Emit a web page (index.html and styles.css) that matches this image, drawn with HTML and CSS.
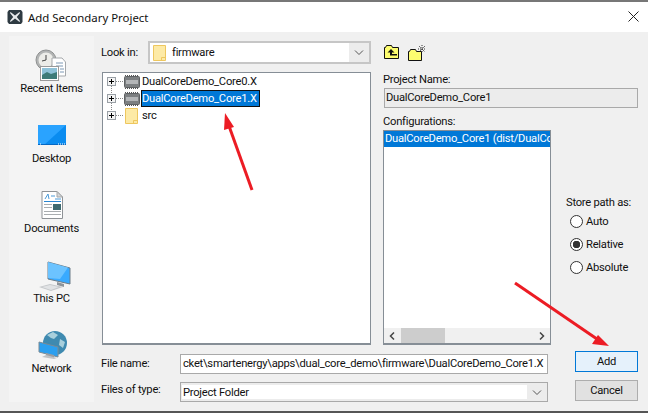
FILE: index.html
```html
<!DOCTYPE html>
<html lang="en">
<head>
<meta charset="utf-8">
<title>Add Secondary Project</title>
<link rel="stylesheet" href="styles.css">
</head>
<body>
<div class="window">
  <header class="titlebar">
    <svg class="app-icon" width="16" height="16" viewBox="0 0 16 16"><path d="M2 1h12l1.500 2v10L14 15H2L.5 13V3z" fill="#2e3a42"/><path d="M3.500 3L8 6.500 12.500 3l.5 1L9.800 8l3.200 4-.5 1L8 9.500 3.500 13l-.5-1 3.200-4L3 4z" fill="#e8eaec"/></svg>
    <span class="title">Add Secondary Project</span>
    <svg class="close" width="11" height="11" viewBox="0 0 11 11"><path d="M.5.500l10 10M10.500.500l-10 10" stroke="#222" stroke-width="1" fill="none"/></svg>
  </header>
  <div class="body">
    <nav class="sidebar">
      <div class="place">
        <svg width="32" height="32" viewBox="0 0 32 32">
          <circle cx="10" cy="12" r="10" fill="#b2b4b4" stroke="#8f9191"/><circle cx="10" cy="12" r="7.500" fill="#ecece8"/><path d="M10 7v5l-4 1" stroke="#444" fill="none"/>
          <path d="M16 10h10l3.500 4v14H16z" fill="#fff" stroke="#a5a8ab"/><path d="M20 15h7M20 18h7M24 21h4M24 24h4" stroke="#7c98b4"/>
          <rect x="4.500" y="18.500" width="18" height="14" fill="#fff" stroke="#9a9a9a"/><rect x="6" y="20" width="15" height="11" fill="#8fc2d8"/><path d="M6 27l5-3 4 2 6-2v7H6z" fill="#3d7b78"/>
        </svg>
        <span>Recent Items</span>
      </div>
      <div class="place">
        <svg width="32" height="32" viewBox="0 0 32 32">
          <rect x="2" y="7" width="28" height="20" fill="#0a8cf0"/><path d="M2 7h28L8 27H2z" fill="#2aa3ff"/><path d="M2 26h28v1H2z" fill="#0568c4"/><path d="M4 26h1M22 26h1M24 26h1M26 26h1M28 26h1" stroke="#fff"/>
        </svg>
        <span>Desktop</span>
      </div>
      <div class="place">
        <svg width="32" height="32" viewBox="0 0 32 32">
          <path d="M6 3.500h15l5.500 5.500v21.500H6z" fill="#fff" stroke="#8e9296"/><path d="M21 3.500V9h5.500z" fill="#d5d7d9" stroke="#a5a8aa"/>
          <path d="M9 11l3-5 1 5M15 8h4M19 11h6" stroke="#4a9ad8" fill="none"/><path d="M8 13.500h17" stroke="#2a86d0"/><path d="M8 16.500h8M8 19.500h8M8 23.500h17M8 26.500h17" stroke="#a9adb0"/>
          <rect x="17" y="16" width="8" height="6" fill="#3e6a70"/>
        </svg>
        <span>Documents</span>
      </div>
      <div class="place">
        <svg width="32" height="32" viewBox="0 0 32 32">
          <path d="M12 4l22 6v16l-22-5z" fill="#39aaff" stroke="#6d7d88"/><path d="M12 4l20 5.500-8 11.500-12-1z" fill="#6cc3ff"/>
          <path d="M21 24v3l7 2v-3z" fill="#8d949a"/><path d="M3 29l11-3 13 3-12 4z" fill="#c5c8cb"/><path d="M6 29l8-2 9 2-8 3z" fill="#e1e3e5"/>
        </svg>
        <span>This PC</span>
      </div>
      <div class="place">
        <svg width="32" height="32" viewBox="0 0 32 32">
          <circle cx="19" cy="15" r="12" fill="#3f8ab0"/><path d="M11 7l6-3 5 3-4 4-3-1zM24 11l5 3-2 6-4-3z" fill="#a8cfdc"/>
          <path d="M3 14l19 5v10L3 24z" fill="#2b9fef" stroke="#7b8b95"/><path d="M10 25v3l8 2v-3z" fill="#9a9ea2"/><path d="M6 29l12 2 3-1-11-3z" fill="#bfc2c5"/>
        </svg>
        <span>Network</span>
      </div>
    </nav>
    <main class="main">
      <div class="top">
        <section class="browser">
          <div class="lookin">
            <label class="lookin-label">Look in:</label>
            <div class="combo combo-look">
              <div class="combo-value">
                <svg class="folder" width="13" height="16" viewBox="0 0 13 16"><path d="M.5.500h12v15h-12z" fill="#fdeaa6" stroke="#eec75f"/><path d="M8.500 15.500v-3h4" fill="none" stroke="#eec75f"/></svg>
                <span>firmware</span>
              </div>
              <svg class="chev" width="9" height="5" viewBox="0 0 9 5"><path d="M.5.500l4 4 4-4" fill="none" stroke="#555"/></svg>
            </div>
          </div>
          <div class="tree">
            <div class="node line-below">
              <span class="exp"></span>
              <svg class="chip" width="16" height="14" viewBox="0 0 16 14"><rect x=".5" y="1.500" width="15" height="11" rx="1" fill="#7c7f81" stroke="#5e6163"/><path d="M1 .5h14M1 13.500h14" stroke="#555" stroke-dasharray="1 1"/><rect x="2" y="5" width="12" height="4" fill="#b4b6b8"/></svg>
              <span class="node-text">DualCoreDemo_Core0.X</span>
            </div>
            <div class="node line-below">
              <span class="exp"></span>
              <svg class="chip" width="16" height="14" viewBox="0 0 16 14"><rect x=".5" y="1.500" width="15" height="11" rx="1" fill="#7c7f81" stroke="#5e6163"/><path d="M1 .5h14M1 13.500h14" stroke="#555" stroke-dasharray="1 1"/><rect x="2" y="5" width="12" height="4" fill="#b4b6b8"/></svg>
              <span class="node-text selected">DualCoreDemo_Core1.X</span>
            </div>
            <div class="node">
              <span class="exp"></span>
              <svg class="folder-small" width="13" height="16" viewBox="0 0 13 16"><path d="M.5.500h12v15h-12z" fill="#fdeaa6" stroke="#eec75f"/><path d="M8.500 15.500v-3h4" fill="none" stroke="#eec75f"/></svg>
              <span class="node-text">src</span>
            </div>
          </div>
        </section>
        <section class="details">
          <div class="tools">
            <svg width="16" height="14" viewBox="0 0 16 14"><path d="M.5 2.500h1l1-2h5l1 2h6v11H.5z" fill="#fdfd70" stroke="#111"/><path d="M7 4L3.500 7.500h2.500v3h7v-1.500H8v-1.500h2.500z" fill="#111"/></svg>
            <svg width="18" height="17" viewBox="0 0 18 17"><path d="M.5 7.500h1l1-2h5l1 2h5v9H.5z" fill="#fdfd70" stroke="#111"/><path d="M14 1v8M10 5h8M11 2l6 6M17 2l-6 6" stroke="#333" stroke-dasharray="1 1"/></svg>
          </div>
          <div class="field-label first">Project Name:</div>
          <div class="readonly">DualCoreDemo_Core1</div>
          <div class="field-label second">Configurations:</div>
          <div class="config-row">
            <div class="config">
              <div class="config-item">DualCoreDemo_Core1 (dist/DualCore</div>
              <div class="hscroll">
                <svg width="6" height="8" viewBox="0 0 6 8"><path d="M5 .500L1.500 4 5 7.500" fill="none" stroke="#444" stroke-width="1.500"/></svg>
                <div class="thumb"></div>
                <svg width="6" height="8" viewBox="0 0 6 8"><path d="M1 .500L4.500 4 1 7.500" fill="none" stroke="#444" stroke-width="1.500"/></svg>
              </div>
            </div>
            <fieldset class="store">
              <div class="store-title">Store path as:</div>
              <label class="radio"><span class="dot"></span>Auto</label>
              <label class="radio"><span class="dot on"></span>Relative</label>
              <label class="radio"><span class="dot"></span>Absolute</label>
            </fieldset>
          </div>
        </section>
      </div>
      <div class="bottom">
        <div class="fields">
          <div class="row">
            <label class="row-label name-label">File name:</label>
            <div class="input">cket\smartenergy\apps\dual_core_demo\firmware\DualCoreDemo_Core1.X</div>
          </div>
          <div class="row">
            <label class="row-label type-label">Files of type:</label>
            <div class="combo combo-type">
              <div class="combo-value plain">Project Folder</div>
              <svg class="chev" width="9" height="5" viewBox="0 0 9 5"><path d="M.5.500l4 4 4-4" fill="none" stroke="#555"/></svg>
            </div>
          </div>
        </div>
        <div class="buttons">
          <button class="btn primary">Add</button>
          <button class="btn">Cancel</button>
        </div>
      </div>
    </main>
  </div>
  <svg class="arrows" width="648" height="413" viewBox="0 0 648 413">
    <path d="M252 190L229 126" stroke="#ec1c24" stroke-width="3" fill="none"/>
    <path d="M225 113l9 14-10 3z" fill="#ec1c24"/>
    <path d="M515 283L597 339" stroke="#ec1c24" stroke-width="3" fill="none"/>
    <path d="M609 346l-17-2 6-9z" fill="#ec1c24"/>
  </svg>
</div>
</body>
</html>
```

FILE: styles.css
```css
* { box-sizing: border-box; }
html, body { margin: 0; padding: 0; }
body { width: 648px; height: 413px; overflow: hidden; background: #fff; font-family: Roboto, sans-serif; font-size: 11.2px; letter-spacing: -0.25px; color: #111; }
.window { position: relative; width: 648px; height: 413px; display: flex; flex-direction: column; border-top: 2px solid #777; border-bottom: 2px solid #555; background: #f0f0f0; }
.titlebar { height: 30px; background: #fff; display: flex; align-items: center; padding: 0 9px 0 7px; gap: 5px; flex: none; }
.app-icon { flex: none; }
.title { font-family: "Noto Sans", sans-serif; font-size: 11.4px; letter-spacing: 0; flex: 1; }
.close { margin-bottom: 2px; }
.body { flex: 1; display: flex; padding: 4px 10px 9px 9px; min-height: 0; }
.sidebar { width: 85px; background: #f4f4f4; display: flex; flex-direction: column; padding-top: 12px; gap: 22px; flex: none; }
.place { height: 48px; display: flex; flex-direction: column; align-items: center; gap: 2px; flex: none; }
.place svg { flex: none; overflow: visible; }
.place span { line-height: 14px; white-space: nowrap; }
.main { flex: 1; margin-left: 7px; display: flex; flex-direction: column; min-width: 0; }
.top { display: flex; gap: 12px; height: 309px; flex: none; }
.browser { width: 270px; display: flex; flex-direction: column; flex: none; }
.lookin { display: flex; align-items: center; height: 23px; margin-top: 5px; }
.lookin-label { width: 47px; }
.combo { display: flex; align-items: center; border: 2px solid #c6c6c6; background: #ececec; }
.combo-look { width: 223px; height: 23px; }
.combo-value { flex: 1; align-self: stretch; background: #fff; display: flex; align-items: center; gap: 6px; padding-left: 3px; }
.chev { width: 20px; flex: none; }
.tree { margin-top: 8px; margin-left: 1px; flex: 1; background: #fff; border: 1px solid #868e96; border-bottom-width: 2px; padding: 0 0 0 4px; }
.node { display: flex; align-items: center; height: 17px; }
.exp { position: relative; width: 9px; height: 9px; border: 1px solid #9aa0a6; background: linear-gradient(#000, #000) center/5px 1px no-repeat, linear-gradient(#000, #000) center/1px 5px no-repeat, #f4f4f4; flex: none; }
.exp::after { content: ""; position: absolute; left: 8px; top: 3px; width: 7px; border-top: 1px dotted #888; }
.line-below .exp::before { content: ""; position: absolute; left: 3px; top: 8px; height: 9px; border-left: 1px dotted #888; }
.chip { margin-left: 8px; flex: none; }
.folder-small { margin-left: 9px; margin-right: 2px; flex: none; }
.node-text { margin-left: 1px; padding: 0 3px 0 1px; line-height: 17px; white-space: nowrap; }
.selected { background: #0078d7; color: #fff; outline: 1px solid #111; outline-offset: -1px; }
.details { flex: 1; display: flex; flex-direction: column; min-width: 0; }
.tools { display: flex; align-items: center; gap: 8px; height: 20px; padding: 0 0 0 1px; margin-top: 6px; }
.field-label { line-height: 14px; }
.field-label.first { margin-top: 11px; }
.field-label.second { margin-top: 7px; }
.readonly { margin: 1px 0 0 1px; height: 20px; border: 1px solid #a9a9a9; background: #ececec; padding-left: 1px; line-height: 18px; }
.config-row { display: flex; flex: 1; margin-top: 1px; min-height: 0; }
.config { width: 168px; flex: none; display: flex; flex-direction: column; background: #fff; border: 1px solid #868e96; border-bottom-width: 2px; }
.config-item { background: #0078d7; color: #fff; line-height: 16px; padding-left: 1px; white-space: nowrap; overflow: hidden; }
.hscroll { margin-top: auto; height: 15px; background: #f0f0f0; display: flex; align-items: center; justify-content: space-between; padding: 0 5px; }
.thumb { width: 44px; height: 15px; background: #cdcdcd; margin-right: auto; margin-left: 6px; }
.store { border: 0; margin: 0 0 0 15px; padding: 66px 0 0 0; min-width: 0; }
.store-title { line-height: 14px; white-space: nowrap; }
.radio { display: flex; align-items: center; gap: 3px; height: 23px; margin-left: 4px; }
.dot { width: 13px; height: 13px; border-radius: 50%; border: 1px solid #333; background: #fff; flex: none; }
.dot.on { background: radial-gradient(circle, #333 0 3.500px, #fff 4px); }
.bottom { display: flex; margin-top: 6px; }
.fields { width: 447px; display: flex; flex-direction: column; gap: 8px; padding-top: 3px; }
.row { display: flex; align-items: center; height: 20px; }
.row-label { width: 79px; flex: none; }
.name-label { padding-bottom: 2px; }
.type-label { padding-bottom: 6px; }
.input { flex: 1; height: 20px; border: 1px solid #a9a9a9; background: #fff; padding-left: 2px; line-height: 18px; white-space: nowrap; overflow: hidden; }
.combo-type { flex: 1; height: 20px; border-color: #a9a9a9; border-width: 1px; }
.combo-value.plain { padding-left: 1px; margin: 2px 0 2px 1px; }
.buttons { margin-left: 27px; display: flex; flex-direction: column; gap: 8px; }
.btn { width: 63px; height: 21px; border: 1px solid #adadad; background: #e1e1e1; font: inherit; letter-spacing: inherit; color: #111; padding: 0; }
.btn.primary { background: #e5f1fb; border: 1px solid #0078d7; }
.arrows { position: absolute; left: 0; top: -2px; pointer-events: none; }
```
